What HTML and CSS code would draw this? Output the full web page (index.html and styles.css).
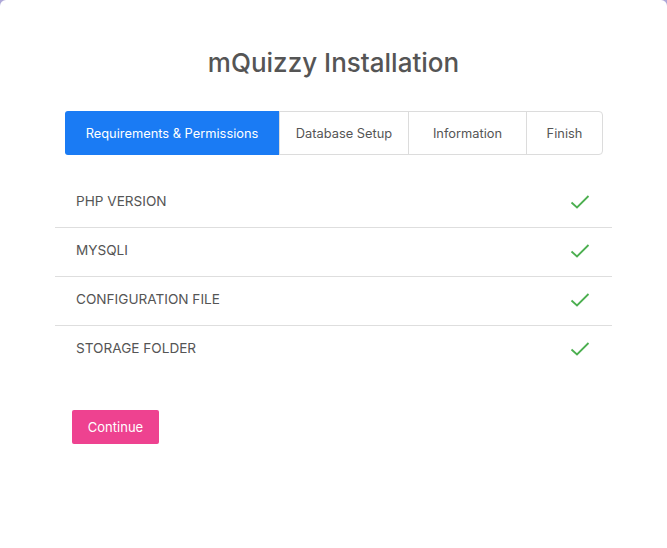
FILE: index.html
```html
<!DOCTYPE html>
<html>
<head>
<meta charset="utf-8">
<link rel="stylesheet" href="styles.css">
</head>
<body>
<div class="card">
  <h1 class="title">mQuizzy Installation</h1>
  <div class="content">
    <div class="tabs">
      <div class="tab active">Requirements &amp; Permissions</div>
      <div class="tab">Database Setup</div>
      <div class="tab">Information</div>
      <div class="tab">Finish</div>
    </div>
    <ul class="checks">
      <li class="row"><span>PHP VERSION</span><svg class="ok" width="20" height="16" viewBox="0 0 20 16"><path d="M1.5 8.5 L7 13.5 L18.5 2" fill="none" stroke="#4caf50" stroke-width="1.8"/></svg></li>
      <li class="row"><span>MYSQLI</span><svg class="ok" width="20" height="16" viewBox="0 0 20 16"><path d="M1.5 8.5 L7 13.5 L18.5 2" fill="none" stroke="#4caf50" stroke-width="1.8"/></svg></li>
      <li class="row"><span>CONFIGURATION FILE</span><svg class="ok" width="20" height="16" viewBox="0 0 20 16"><path d="M1.5 8.5 L7 13.5 L18.5 2" fill="none" stroke="#4caf50" stroke-width="1.8"/></svg></li>
      <li class="row"><span>STORAGE FOLDER</span><svg class="ok" width="20" height="16" viewBox="0 0 20 16"><path d="M1.5 8.5 L7 13.5 L18.5 2" fill="none" stroke="#4caf50" stroke-width="1.8"/></svg></li>
    </ul>
    <button class="btn">Continue</button>
  </div>
</div>
</body>
</html>
```
FILE: styles.css
```css
html, body {
  margin: 0;
  padding: 0;
  background: #aea8d8;
  height: 100%;
}
body {
  font-family: Inter, "Liberation Sans", sans-serif;
  color: #555;
}
.card {
  background: #fff;
  border-radius: 6px 6px 0 0;
  min-height: 548px;
  box-sizing: border-box;
  padding-top: 47px;
}
.title {
  margin: 0;
  text-align: center;
  font-size: 26px;
  font-weight: 500;
  color: #555;
  line-height: 32px;
}
.content {
  width: 557px;
  margin-left: 55px;
  margin-top: 32px;
}
.tabs {
  display: flex;
  margin: 0 9px 0 10px;
  border: 1px solid #dcdcdc;
  border-radius: 4px;
  height: 42px;
}
.tab {
  display: flex;
  align-items: center;
  justify-content: center;
  font-size: 12.85px;
  color: #555;
  border-left: 1px solid #dcdcdc;
  box-sizing: border-box;
}
.tab:nth-child(2) { width: 129px; }
.tab:nth-child(3) { width: 118px; }
.tab:nth-child(4) { flex: 1; }
.tab.active {
  background: #1a7bf4;
  color: #fff;
  border-left: none;
  border-radius: 3px 0 0 3px;
  margin: -1px 0 -1px -1px;
  height: 44px;
  width: 214px;
}
.checks {
  list-style: none;
  margin: 24px 0 0;
  padding: 0;
}
.row {
  display: flex;
  align-items: center;
  justify-content: space-between;
  height: 44px;
  padding: 0 22px 4px 21px;
  font-size: 13.6px;
  color: #555;
  border-bottom: 1px solid #dedede;
}
.row:last-child { border-bottom: none; }
.ok { display: block; margin-top: 2px; }
.btn {
  margin: 36px 0 0 17px;
  width: 87px;
  height: 34px;
  background: #ee4290;
  color: #fff;
  border: none;
  border-radius: 2px;
  font-family: inherit;
  font-size: 13px;
  padding: 0;
}
```
